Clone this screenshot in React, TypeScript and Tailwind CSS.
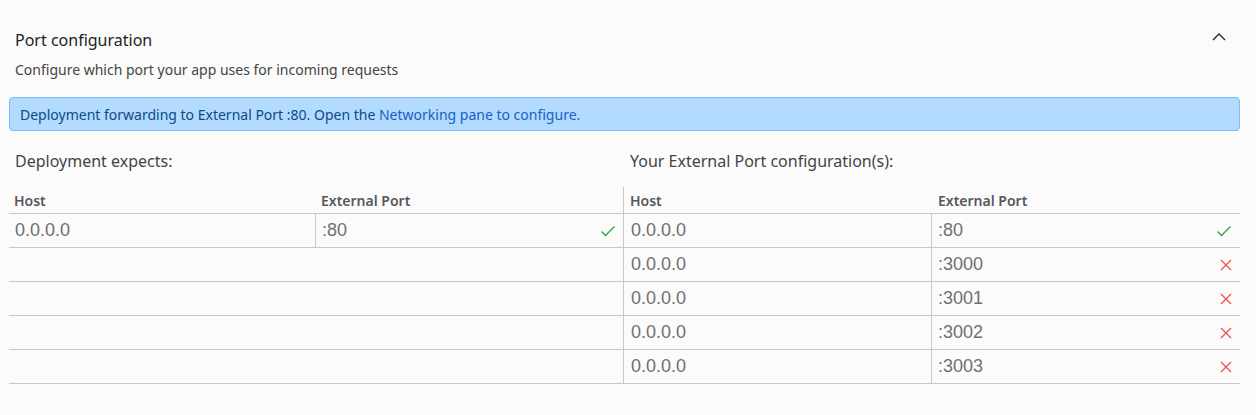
import React from "react";

const Check = () => (
  <svg width="16" height="12" viewBox="0 0 16 12" fill="none">
    <path d="M1.5 6.5 L5.5 10.5 L14.5 1.5" stroke="#2aa84a" strokeWidth="1.4" />
  </svg>
);

const Cross = () => (
  <svg width="12" height="12" viewBox="0 0 12 12" fill="none">
    <path d="M1 1 L11 11 M11 1 L1 11" stroke="#ef5350" strokeWidth="1.4" />
  </svg>
);

const cellFont = { fontFamily: '"Liberation Sans", Arial, sans-serif' };

export default function App() {
  const right = [
    { port: ":80", ok: true },
    { port: ":3000", ok: false },
    { port: ":3001", ok: false },
    { port: ":3002", ok: false },
    { port: ":3003", ok: false },
  ];
  return (
    <div
      className="w-[1256px] h-[415px] bg-[#fbfbfb] px-[9px] pt-[28px]"
      style={{ fontFamily: '"Noto Sans", "Open Sans", sans-serif' }}
    >
      <div className="w-[1231px]">
        <div className="flex items-center justify-between pl-[6px] pr-[14px]">
          <div className="text-[16px] leading-[24px] text-[#222]">Port configuration</div>
          <svg width="14" height="8" viewBox="0 0 14 8" fill="none" className="mt-[-7px]">
            <path d="M1 7 L7 1 L13 7" stroke="#222" strokeWidth="1.3" />
          </svg>
        </div>
        <div className="pl-[6px] mt-[8px] text-[14px] leading-[20px] text-[#444]">
          Configure which port your app uses for incoming requests
        </div>
        <div className="mt-[17px] h-[34px] flex items-center rounded-[4px] border border-[#7fbbf2] bg-[#b3daff] px-[10px] text-[14px] text-[#0d4a85]">
          Deployment forwarding to External Port :80. Open the&nbsp;
          <span className="text-[#1662c4]">Networking pane to configure.</span>
        </div>
        <div className="mt-[18px] grid grid-cols-[614px_617px]">
          <div>
            <div className="pl-[6px] text-[16px] leading-[24px] text-[#444]">Deployment expects:</div>
            <div className="mt-[15px]">
              <div className="grid grid-cols-[306px_308px] h-[26px] border-b border-[#c8c8c8] items-end pb-[2px] text-[14px] font-semibold text-[#56575d]">
                <div className="pl-[5px]">Host</div>
                <div className="pl-[6px]">External Port</div>
              </div>
              <div className="grid grid-cols-[306px_308px] h-[34px] border-b border-[#c8c8c8] text-[18px] text-[#707070]" style={cellFont}>
                <div className="pl-[6px] flex items-center">0.0.0.0</div>
                <div className="pl-[6px] pr-[7px] flex items-center justify-between border-l border-[#c8c8c8]">
                  <span>:80</span>
                  <Check />
                </div>
              </div>
              {[0, 1, 2, 3].map((i) => (
                <div key={i} className="h-[34px] border-b border-[#c8c8c8]" />
              ))}
            </div>
          </div>
          <div>
            <div className="pl-[7px] text-[16px] leading-[24px] text-[#444]">Your External Port configuration(s):</div>
            <div className="mt-[14px] pt-[1px] border-l border-[#c8c8c8]">
              <div className="grid grid-cols-[307px_309px] h-[26px] border-b border-[#c8c8c8] items-end pb-[2px] text-[14px] font-semibold text-[#56575d]">
                <div className="pl-[6px]">Host</div>
                <div className="pl-[7px]">External Port</div>
              </div>
              {right.map((r) => (
                <div key={r.port} className="grid grid-cols-[307px_309px] h-[34px] border-b border-[#c8c8c8] text-[18px] text-[#707070]" style={cellFont}>
                  <div className="pl-[7px] flex items-center">0.0.0.0</div>
                  <div className="pl-[6px] pr-[8px] flex items-center justify-between border-l border-[#c8c8c8]">
                    <span>{r.port}</span>
                    {r.ok ? <Check /> : <Cross />}
                  </div>
                </div>
              ))}
            </div>
          </div>
        </div>
      </div>
    </div>
  );
}
